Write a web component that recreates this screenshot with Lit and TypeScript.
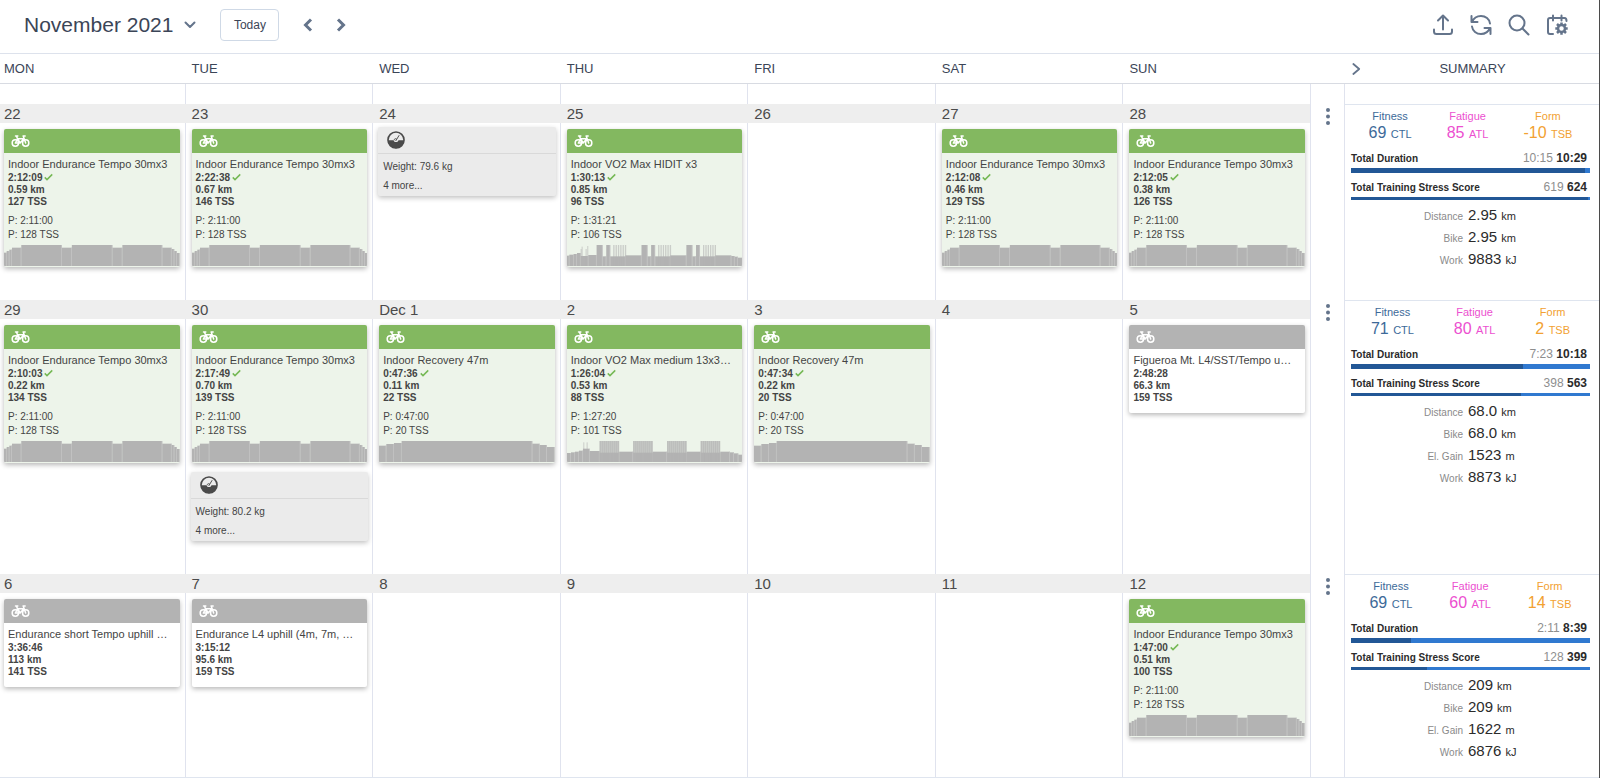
import { LitElement, html, svg, css, nothing } from "lit";
import { customElement, property } from "lit/decorators.js";

type Bar = [x: number, top: number, end: number, thin?: boolean];
type Profile = "tempo" | "recovery" | "hidit" | "medium";

interface Workout {
  kind: "done" | "planned";
  title: string;
  time: string;
  km: string;
  tss: number;
  plan?: string;
  planTss?: number;
  profile?: Profile;
}
interface Metric {
  kind: "metric";
  weight: string;
}
interface Day {
  label: string;
  items: (Workout | Metric)[];
}
interface Load {
  ctl: number;
  atl: number;
  tsb: number;
  planTime: string;
  time: string;
  timePct: number;
  planTss: number;
  tss: number;
  stats: [string, string, string][];
}
interface Week {
  days: Day[];
  load: Load;
}

const CHART_W = 528;
const CHART_H = 63;

/* Repeats evenly spaced thin bars between two x positions. */
const stripes = (from: number, to: number, step: number): Bar[] => {
  const out: Bar[] = [];
  for (let x = from; x < to; x += step) out.push([x, 0, x + 4, true]);
  return out;
};

const hiditSet = (x: number): Bar[] => [
  [x, 0, x + 18],
  [x + 18, 34, x + 29],
  [x + 29, 0, x + 41],
  [x + 41, 34, x + 87],
  ...stripes(x + 50, x + 86, 7),
];

const mediumSet = (x: number): Bar[] => [[x, 35, x + 59], [x, 0, x + 59, true], ...stripes(x, x + 56, 6)];

const PROFILES: Record<Profile, Bar[]> = {
  tempo: [
    [0, 23, 8], [8, 18, 16], [16, 14, 24], [24, 8, 52], [52, 0, 174], [174, 8, 204],
    [204, 0, 326], [326, 8, 356], [356, 0, 476], [476, 8, 504], [504, 12, 512],
    [512, 18, 520], [520, 24, 528],
  ],
  recovery: [
    [0, 14, 22], [22, 9, 45], [45, 6, 68], [68, 0, 461], [461, 8, 483], [483, 12, 505],
    [505, 18, 528],
  ],
  hidit: [
    [0, 32, 7], [7, 29, 20], [20, 27, 30], [30, 24, 41], [41, 12, 44, true], [44, 5, 47, true],
    [41, 33, 64], [56, 12, 59, true], [61, 3, 64, true], [64, 30, 89],
    ...hiditSet(89), [176, 31, 224],
    ...hiditSet(224), [311, 31, 359],
    ...hiditSet(359), [446, 31, 494],
    [494, 33, 504], [504, 35, 514], [514, 38, 528],
  ],
  medium: [
    [0, 36, 12], [12, 34, 24], [24, 32, 36], [36, 29, 48], [48, 23, 68], [49, 4, 52, true],
    [59, 4, 62, true], [68, 30, 98],
    ...mediumSet(98), [157, 32, 199],
    ...mediumSet(199), [258, 32, 301],
    ...mediumSet(301), [360, 32, 402],
    ...mediumSet(402), [461, 32, 490],
    [490, 34, 502], [502, 37, 515], [515, 41, 528],
  ],
};

const done = (
  title: string, time: string, km: string, tss: number,
  plan = "2:11:00", planTss = 128, profile: Profile = "tempo",
): Workout => ({ kind: "done", title, time, km, tss, plan, planTss, profile });
const planned = (title: string, time: string, km: string, tss: number): Workout => ({
  kind: "planned", title, time, km, tss,
});
const day = (label: string, ...items: (Workout | Metric)[]): Day => ({ label, items });

const TEMPO = "Indoor Endurance Tempo 30mx3";

const WEEKS: Week[] = [
  {
    days: [
      day("22", done(TEMPO, "2:12:09", "0.59", 127)),
      day("23", done(TEMPO, "2:22:38", "0.67", 146)),
      day("24", { kind: "metric", weight: "79.6" }),
      day("25", done("Indoor VO2 Max HIDIT x3", "1:30:13", "0.85", 96, "1:31:21", 106, "hidit")),
      day("26"),
      day("27", done(TEMPO, "2:12:08", "0.46", 129)),
      day("28", done(TEMPO, "2:12:05", "0.38", 126)),
    ],
    load: {
      ctl: 69, atl: 85, tsb: -10,
      planTime: "10:15", time: "10:29", timePct: 98, planTss: 619, tss: 624,
      stats: [["Distance", "2.95", "km"], ["Bike", "2.95", "km"], ["Work", "9883", "kJ"]],
    },
  },
  {
    days: [
      day("29", done(TEMPO, "2:10:03", "0.22", 134)),
      day("30", done(TEMPO, "2:17:49", "0.70", 139), { kind: "metric", weight: "80.2" }),
      day("Dec 1", done("Indoor Recovery 47m", "0:47:36", "0.11", 22, "0:47:00", 20, "recovery")),
      day("2", done("Indoor VO2 Max medium 13x3…", "1:26:04", "0.53", 88, "1:27:20", 101, "medium")),
      day("3", done("Indoor Recovery 47m", "0:47:34", "0.22", 20, "0:47:00", 20, "recovery")),
      day("4"),
      day("5", planned("Figueroa Mt. L4/SST/Tempo u…", "2:48:28", "66.3", 159)),
    ],
    load: {
      ctl: 71, atl: 80, tsb: 2,
      planTime: "7:23", time: "10:18", timePct: 72, planTss: 398, tss: 563,
      stats: [
        ["Distance", "68.0", "km"], ["Bike", "68.0", "km"],
        ["El. Gain", "1523", "m"], ["Work", "8873", "kJ"],
      ],
    },
  },
  {
    days: [
      day("6", planned("Endurance short Tempo uphill …", "3:36:46", "113", 141)),
      day("7", planned("Endurance L4 uphill (4m, 7m, …", "3:15:12", "95.6", 159)),
      day("8"), day("9"), day("10"), day("11"),
      day("12", done(TEMPO, "1:47:00", "0.51", 100)),
    ],
    load: {
      ctl: 69, atl: 60, tsb: 14,
      planTime: "2:11", time: "8:39", timePct: 25, planTss: 128, tss: 399,
      stats: [
        ["Distance", "209", "km"], ["Bike", "209", "km"],
        ["El. Gain", "1622", "m"], ["Work", "6876", "kJ"],
      ],
    },
  },
];

const bikeIcon = html`<svg class="bike" viewBox="0 0 56 36" aria-hidden="true">
  <g fill="none" stroke="#fff" stroke-width="4.500" stroke-linejoin="round" stroke-linecap="round">
    <circle cx="12.500" cy="24" r="9.500" />
    <circle cx="43.500" cy="24" r="9.500" />
    <path d="M12.500 24 20 11H38L27 24H13M18 9 27 24M16 3.500 19 11M13 3H20M43.500 24 36 3H42" />
  </g>
</svg>`;

const gaugeIcon = html`<svg class="gauge" viewBox="0 0 56 56" aria-hidden="true">
  <circle cx="28" cy="28" r="25" fill="none" stroke="#4a4a4a" stroke-width="5" />
  <path d="M3 29H20L24 34H32L36 29H53A25 25 0 0 1 3 29Z" fill="#4a4a4a" />
  <path d="M27 31 38 13" stroke="#4a4a4a" stroke-width="3" />
  <path d="M22 29A5 5 0 0 1 30 25" fill="none" stroke="#4a4a4a" stroke-width="3" />
</svg>`;

const checkIcon = html`<svg class="check" viewBox="0 0 24 20" aria-label="Completed">
  <path d="M2 11 8 17 22 3" fill="none" stroke="#76b956" stroke-width="4" />
</svg>`;

@customElement("workout-chart")
export class WorkoutChart extends LitElement {
  @property() profile: Profile = "tempo";

  static styles = css`
    :host { display: block; height: 21px; margin-top: 3px; }
    svg { display: block; width: 100%; height: 100%; }
  `;

  render() {
    return html`<svg viewBox="0 0 ${CHART_W} ${CHART_H}" preserveAspectRatio="none" aria-hidden="true">
      ${PROFILES[this.profile].map(([x, top, end, thin]) => svg`
        <rect x=${x} y=${top} width=${end - x} height=${CHART_H - top} fill="#b3b3b3" fill-opacity=${thin ? 0.6 : 1} />
        ${thin ? nothing : svg`<rect x=${end - 2} y=${top} width="2" height=${CHART_H - top} fill="#c8c8c8" />`}
      `)}
    </svg>`;
  }
}

@customElement("workout-card")
export class WorkoutCard extends LitElement {
  @property({ attribute: false }) workout!: Workout;

  static styles = css`
    :host { display: block; margin-bottom: 11px; }
    .card {
      background: #fff;
      border-radius: 2px;
      box-shadow: 0 2px 5px rgba(0, 0, 0, 0.28);
      overflow: hidden;
      color: #444;
      font-size: 10px;
      padding-bottom: 9px;
    }
    .card.done { background: #edf4ea; padding-bottom: 1px; }
    .head { display: flex; align-items: center; height: 24px; padding-left: 7px; background: #b3b3b3; }
    .done .head { background: #83b860; }
    .bike { width: 19px; height: 12px; }
    .body { padding: 4px 4px 0; }
    .title { margin: 0; font-size: 11px; font-weight: 400; line-height: 15px; white-space: nowrap; overflow: hidden; }
    .facts { font-weight: 700; line-height: 12px; }
    .check { width: 9px; height: 8px; margin-left: 2px; }
    .plan { margin-top: 6px; line-height: 14px; }
  `;

  render() {
    const w = this.workout;
    return html`<article class="card ${w.kind}">
      <div class="head">${bikeIcon}</div>
      <div class="body">
        <h3 class="title">${w.title}</h3>
        <div class="facts">
          <div>${w.time}${w.kind === "done" ? checkIcon : nothing}</div>
          <div>${w.km} km</div>
          <div>${w.tss} TSS</div>
        </div>
        ${w.plan
          ? html`<div class="plan"><div>P: ${w.plan}</div><div>P: ${w.planTss} TSS</div></div>`
          : nothing}
      </div>
      ${w.profile ? html`<workout-chart .profile=${w.profile}></workout-chart>` : nothing}
    </article>`;
  }
}

@customElement("metric-card")
export class MetricCard extends LitElement {
  @property() weight = "";

  static styles = css`
    :host { display: block; margin: -2px -1px 11px; }
    .card {
      background: #ebebeb;
      border-radius: 2px;
      box-shadow: 0 2px 5px rgba(0, 0, 0, 0.24);
      color: #444;
      font-size: 10px;
      line-height: 19px;
    }
    .head { display: flex; align-items: center; height: 26px; padding-left: 9px; border-bottom: 1px solid #d9d9d9; }
    .gauge { width: 18px; height: 18px; }
    .body { padding: 3px 5px 1px; }
  `;

  render() {
    return html`<article class="card">
      <div class="head">${gaugeIcon}</div>
      <div class="body"><div>Weight: ${this.weight} kg</div><div>4 more...</div></div>
    </article>`;
  }
}

@customElement("week-summary")
export class WeekSummary extends LitElement {
  @property({ attribute: false }) load!: Load;

  static styles = css`
    :host { display: block; padding: 4px 9px 15px 6px; color: #2b2b2b; }
    .loads { display: flex; justify-content: space-around; text-align: center; font-size: 11px; line-height: 14px; }
    .num { line-height: 20px; }
    .num b { font-size: 16px; font-weight: 400; white-space: pre; }
    .ctl { color: #3d6a99; }
    .atl { color: #ec4fd0; }
    .tsb { color: #f2a131; }
    .total { display: flex; justify-content: space-between; align-items: baseline; margin-top: 6px; padding-right: 3px; font-size: 12px; font-weight: 700; line-height: 16px; }
    .total .name { font-size: 10px; line-height: 12px; }
    .total .plan { color: #8e8e8e; font-weight: 400; }
    .bar { height: 3px; margin-top: 2px; background: #3079d0; }
    .bar.thick { height: 5px; }
    .fill { height: 100%; background: #225796; }
    .stats { display: grid; grid-template-columns: 112px 1fr; align-items: baseline; column-gap: 5px; margin: 4px 0 0; line-height: 12px; }
    .stats dt { text-align: right; font-size: 10px; color: #8a8a8a; }
    .stats dd { display: flex; align-items: baseline; column-gap: 4px; margin: 0; font-size: 11px; }
    .stats .value { font-size: 15px; line-height: 22px; }
  `;

  render() {
    const l = this.load;
    return html`
      <div class="loads">
        <div class="ctl">Fitness<div class="num"><b>${l.ctl} </b>CTL</div></div>
        <div class="atl">Fatigue<div class="num"><b>${l.atl} </b>ATL</div></div>
        <div class="tsb">Form<div class="num"><b>${l.tsb} </b>TSB</div></div>
      </div>
      <div class="total">
        <span class="name">Total Duration</span>
        <span><span class="plan">${l.planTime}</span> ${l.time}</span>
      </div>
      <div class="bar thick"><div class="fill" style="width:${l.timePct}%"></div></div>
      <div class="total">
        <span class="name">Total Training Stress Score</span>
        <span><span class="plan">${l.planTss}</span> ${l.tss}</span>
      </div>
      <div class="bar"><div class="fill" style="width:${Math.round((l.planTss / l.tss) * 100)}%"></div></div>
      <dl class="stats">
        ${l.stats.map(([name, value, unit]) => html`
          <dt>${name}</dt>
          <dd><span class="value">${value}</span><span>${unit}</span></dd>
        `)}
      </dl>`;
  }
}

@customElement("app-root")
export class AppRoot extends LitElement {
  static styles = css`
    :host {
      display: block;
      box-sizing: border-box;
      min-height: 100vh;
      overflow: hidden;
      border-right: 1px solid #4b4b4b;
      background: #fff;
      color: #3b4557;
      font-family: "Liberation Sans", Arial, Helvetica, sans-serif;
    }
    button { display: inline-flex; align-items: center; justify-content: center; padding: 0; border: 0; background: none; color: inherit; font: inherit; cursor: pointer; }
    .stroke { fill: none; stroke: #64748b; stroke-width: 2; stroke-linecap: round; stroke-linejoin: round; }
    .toolbar { display: flex; align-items: center; height: 50px; padding: 0 31px 3px 24px; border-bottom: 1px solid #dde2ec; }
    .month { gap: 11px; margin-right: 24px; font-size: 21px; }
    .month svg { width: 12px; height: 8px; }
    .today { width: 59px; height: 32px; margin-right: 21px; border: 1px solid #cfd9e6; border-radius: 4px; font-size: 12px; box-sizing: border-box; }
    .step { width: 16px; height: 20px; margin-right: 17px; }
    .step svg { width: 10px; height: 14px; }
    .step .stroke { stroke-width: 3; stroke-linecap: butt; stroke-linejoin: miter; }
    .tools { display: flex; gap: 16px; margin-left: auto; }
    .tools svg { width: 22px; height: 22px; }

    .row { display: grid; grid-template-columns: minmax(0, 1fr) 33px 255px; }
    .days { display: grid; grid-template-columns: repeat(7, minmax(0, 1fr)); margin-left: -2px; }
    .names { height: 29px; border-bottom: 1px solid #d8dbe2; font-size: 13px; line-height: 29px; }
    .names .days { text-indent: 6px; }
    .collapse { display: flex; align-items: center; padding-left: 8px; }
    .collapse svg { width: 10px; height: 14px; }
    .sum-name { display: grid; grid-template-columns: 17px 1fr 15px; text-align: center; }
    .sum-name .title { grid-column: 2; }
    .previous { height: 20px; }
    .cell { border-right: 1px solid #e0e3ee; padding-bottom: 22px; }
    .previous .cell { padding: 0; }
    .date { height: 19px; margin: 0 -1px 6px 0; padding-left: 6px; background: #eee; color: #4a4a4a; font-size: 15px; line-height: 20px; }
    .cell:last-child .date { margin-right: 0; }
    .items { padding: 0 5px 0 6px; }
    .menu { align-self: start; justify-self: center; width: 16px; height: 25px; }
    .menu svg { width: 4px; height: 17px; }
    .side { border-left: 1px solid #e0e3ee; }
    .week .side { border-top: 1px solid #dfe5ef; }
    .end { border-top: 1px solid #dfe5ef; }
  `;

  private renderDay(d: Day) {
    return html`<section class="cell">
      <div class="date">${d.label}</div>
      <div class="items">
        ${d.items.map((item) =>
          item.kind === "metric"
            ? html`<metric-card weight=${item.weight}></metric-card>`
            : html`<workout-card .workout=${item}></workout-card>`)}
      </div>
    </section>`;
  }

  private renderWeek(w: Week) {
    return html`<div class="row week">
      <div class="days">${w.days.map((d) => this.renderDay(d))}</div>
      <button class="menu" aria-label="Week options">
        <svg viewBox="0 0 4 17" fill="#64748b">
          <circle cx="2" cy="2" r="2" /><circle cx="2" cy="8.5" r="2" /><circle cx="2" cy="15" r="2" />
        </svg>
      </button>
      <div class="side"><week-summary .load=${w.load}></week-summary></div>
    </div>`;
  }

  render() {
    return html`
      <header class="toolbar">
        <button class="month">November 2021
          <svg class="stroke" viewBox="0 0 12 8"><path d="M1.5 1.5 6 6 10.5 1.5" /></svg>
        </button>
        <button class="today">Today</button>
        <button class="step" aria-label="Previous">
          <svg class="stroke" viewBox="0 0 10 14"><path d="M8 1.5 2.5 7 8 12.5" /></svg>
        </button>
        <button class="step" aria-label="Next">
          <svg class="stroke" viewBox="0 0 10 14"><path d="M2 1.5 7.5 7 2 12.5" /></svg>
        </button>
        <nav class="tools">
          <button aria-label="Upload">
            <svg class="stroke" viewBox="0 0 22 22"><path d="M11 15.500V2M6 6.500 11 1.500 16 6.500M2 15.500V17.500Q2 20 4.500 20H17.500Q20 20 20 17.500V15.500" /></svg>
          </button>
          <button aria-label="Refresh">
            <svg class="stroke" viewBox="0 0 22 22"><path d="M1.500 2V8H7.500M2 8C3.500 4.500 7 2 11 2C15.500 2 19.500 5 20 9.500M20.500 20V14H14.500M20 14C18.500 17.500 15 20 11 20C6.500 20 2.500 17 2 12.500" /></svg>
          </button>
          <button aria-label="Search">
            <svg class="stroke" viewBox="0 0 22 22"><circle cx="9" cy="9" r="7.500" /><path d="M14.500 14.500 20.500 20.500" /></svg>
          </button>
          <button aria-label="Calendar settings">
            <svg class="stroke" viewBox="0 0 22 22">
              <path d="M7 20H4Q2 20 2 18V6Q2 4 4 4H18.500Q20.500 4 20.500 7M7 1.500V6.500M15.500 1.500V6.500" />
              <circle cx="15.500" cy="14.500" r="3.500" stroke-width="2.500" />
              <path stroke-linecap="butt" stroke-width="2.500" d="M15.500 11V8.500M15.500 18V20.800M12 14.500H9.300M19 14.500H21.700M13 12 11 10M18 12 20 10M13 17 11 19M18 17 20 19" />
            </svg>
          </button>
        </nav>
      </header>
      <div class="row names">
        <div class="days">${["MON", "TUE", "WED", "THU", "FRI", "SAT", "SUN"].map((n) => html`<span>${n}</span>`)}</div>
        <span></span>
        <div class="sum-name">
          <button class="collapse" aria-label="Collapse summary">
            <svg class="stroke" viewBox="0 0 10 14"><path d="M1.500 1.500 8 7 1.500 12.500" /></svg>
          </button>
          <span class="title">SUMMARY</span>
        </div>
      </div>
      <div class="row previous">
        <div class="days">${Array.from({ length: 7 }, () => html`<div class="cell"></div>`)}</div>
        <span></span>
        <div class="side"></div>
      </div>
      ${WEEKS.map((w) => this.renderWeek(w))}
      <div class="end"></div>
    `;
  }
}
